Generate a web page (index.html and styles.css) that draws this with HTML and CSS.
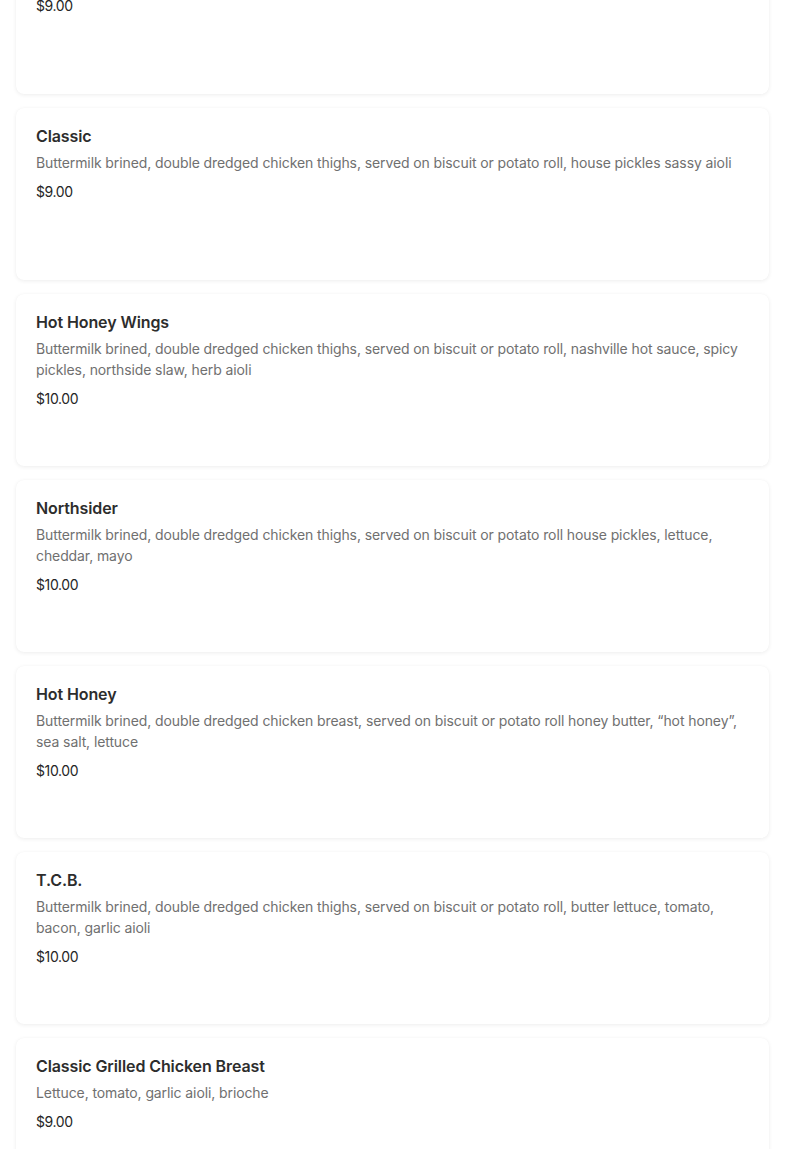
FILE: index.html
```html
<!DOCTYPE html>
<html lang="en">
<head>
<meta charset="utf-8">
<title>Menu</title>
<link rel="stylesheet" href="styles.css">
</head>
<body>
<main class="menu">
  <article class="item">
    <h3 class="item-name">Nashville Hot</h3>
    <p class="item-desc">Buttermilk brined, double dredged chicken thighs, served on biscuit or potato roll, house pickles</p>
    <p class="item-price">$9.00</p>
  </article>
  <article class="item">
    <h3 class="item-name">Classic</h3>
    <p class="item-desc">Buttermilk brined, double dredged chicken thighs, served on biscuit or potato roll, house pickles sassy aioli</p>
    <p class="item-price">$9.00</p>
  </article>
  <article class="item">
    <h3 class="item-name">Hot Honey Wings</h3>
    <p class="item-desc">Buttermilk brined, double dredged chicken thighs, served on biscuit or potato roll, nashville hot sauce, spicy pickles, northside slaw, herb aioli</p>
    <p class="item-price">$10.00</p>
  </article>
  <article class="item">
    <h3 class="item-name">Northsider</h3>
    <p class="item-desc">Buttermilk brined, double dredged chicken thighs, served on biscuit or potato roll house pickles, lettuce, cheddar, mayo</p>
    <p class="item-price">$10.00</p>
  </article>
  <article class="item">
    <h3 class="item-name">Hot Honey</h3>
    <p class="item-desc">Buttermilk brined, double dredged chicken breast, served on biscuit or potato roll honey butter, “hot honey”, sea salt, lettuce</p>
    <p class="item-price">$10.00</p>
  </article>
  <article class="item">
    <h3 class="item-name">T.C.B.</h3>
    <p class="item-desc">Buttermilk brined, double dredged chicken thighs, served on biscuit or potato roll, butter lettuce, tomato, bacon, garlic aioli</p>
    <p class="item-price">$10.00</p>
  </article>
  <article class="item">
    <h3 class="item-name">Classic Grilled Chicken Breast</h3>
    <p class="item-desc">Lettuce, tomato, garlic aioli, brioche</p>
    <p class="item-price">$9.00</p>
  </article>
</main>
</body>
</html>
```
FILE: styles.css
```css
html, body {
  margin: 0;
  padding: 0;
  background: #ffffff;
}
body {
  font-family: "Inter", "Liberation Sans", sans-serif;
  color: #2b2b2b;
  overflow: hidden;
}
.menu {
  display: flex;
  flex-direction: column;
  gap: 14px;
  padding: 0 16px;
  margin-top: -78px;
}
.item {
  box-sizing: border-box;
  height: 172px;
  padding: 16px 20px;
  background: #fff;
  border-radius: 8px;
  box-shadow: 0 1px 4px rgba(0, 0, 0, 0.07), 0 0 1px rgba(0, 0, 0, 0.04);
}
.item-name {
  margin: 0;
  font-size: 16px;
  font-weight: 600;
  line-height: 24px;
  color: #2d2d2d;
  letter-spacing: -0.1px;
}
.item-desc {
  margin: 4px 0 0;
  font-size: 14px;
  line-height: 21px;
  color: #707070;
  letter-spacing: -0.1px;
}
.item-price {
  margin: 9px 0 0;
  font-size: 14px;
  line-height: 20px;
  color: #262626;
  letter-spacing: -0.4px;
}
```
